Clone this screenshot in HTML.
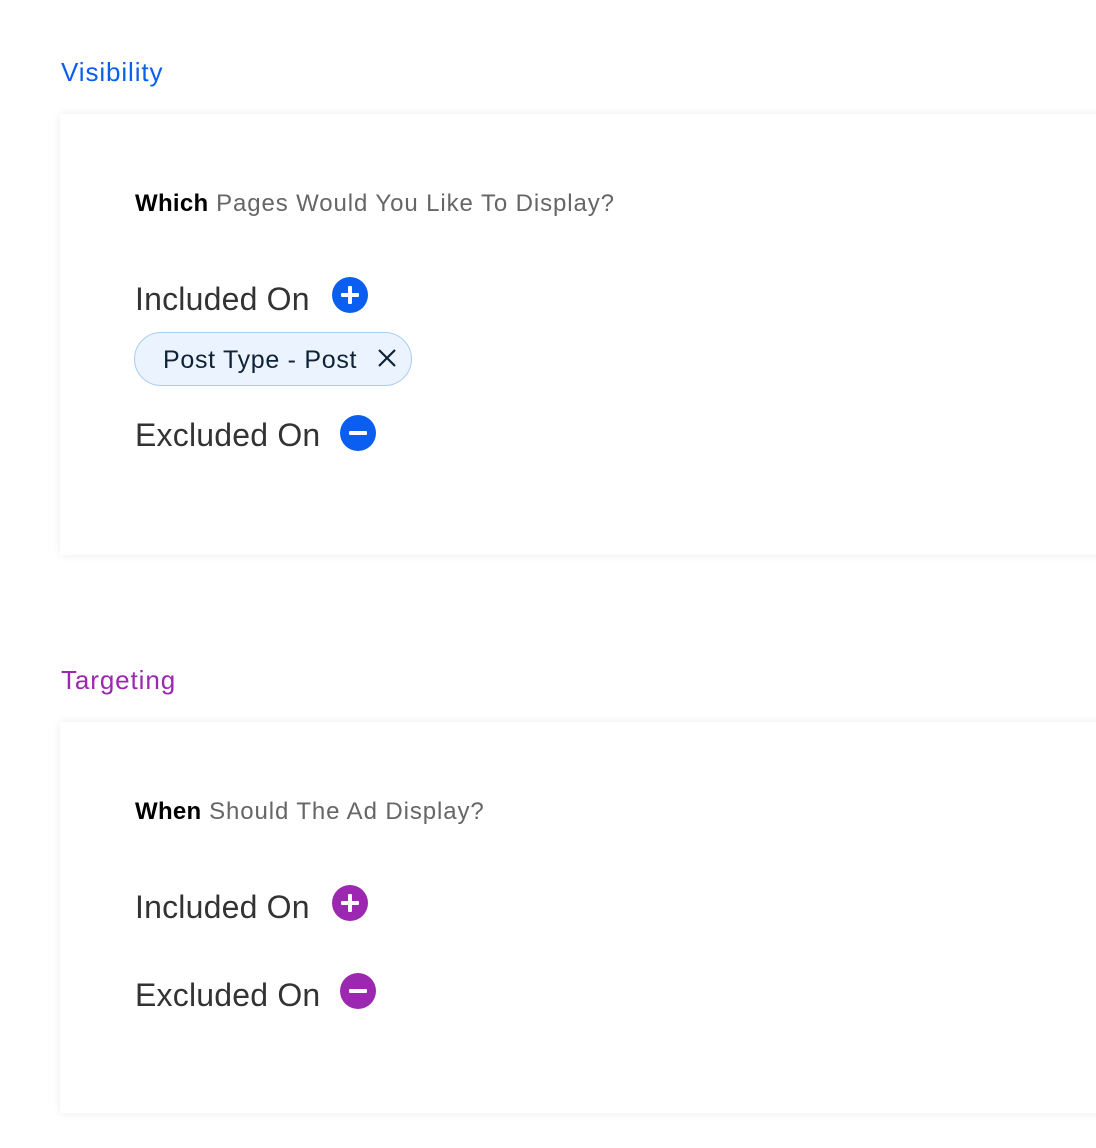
<!DOCTYPE html>
<html><head><style>
body{margin:0;background:#fff;font-family:"Liberation Sans",sans-serif;width:1096px;height:1148px;overflow:hidden;position:relative}
.h{position:absolute;left:61px;font-size:26px;letter-spacing:0.9px}
.card{position:absolute;left:60px;width:1100px;background:#fff;box-shadow:0 0 8px rgba(0,0,0,0.08)}
.q{position:absolute;left:135px;font-size:24px;color:#666;white-space:nowrap;letter-spacing:0.9px}
.q b{color:#000;letter-spacing:0.3px}
.l{position:absolute;left:135px;font-size:32px;color:#333;white-space:nowrap;letter-spacing:0.2px}
.ic{position:absolute;width:36px;height:36px;border-radius:50%}
.ic:before{content:"";position:absolute;left:9px;top:16px;width:18px;height:4px;background:#fff;border-radius:1px}
.p:after{content:"";position:absolute;left:16px;top:9px;width:4px;height:18px;background:#fff;border-radius:1px}
.chip{position:absolute;left:134px;top:332px;width:276px;height:52px;border:1.5px solid #a9cdf5;background:#eaf3fe;border-radius:28px;font-size:25px;color:#0f2236;letter-spacing:0.7px}
</style></head><body>
<div class="h" style="top:57px;color:#0a5ef0">Visibility</div>
<div class="card" style="top:114px;height:441px"></div>
<div class="q" style="top:190px"><b>Which</b> Pages Would You Like To Display?</div>
<div class="l" style="top:281px">Included On</div>
<div class="ic p" style="left:332px;top:277px;background:#0a5ef0"></div>
<div class="chip"><span style="position:absolute;left:28px;top:13px">Post Type - Post</span>
<svg style="position:absolute;left:242px;top:15px" width="20" height="20" viewBox="0 0 20 20"><path d="M2 2L18 18M18 2L2 18" stroke="#0f2236" stroke-width="2.2"/></svg></div>
<div class="l" style="top:417px">Excluded On</div>
<div class="ic" style="left:340px;top:415px;background:#0a5ef0"></div>

<div class="h" style="top:665px;color:#9c27b0">Targeting</div>
<div class="card" style="top:722px;height:391px"></div>
<div class="q" style="top:798px"><b>When</b> Should The Ad Display?</div>
<div class="l" style="top:889px">Included On</div>
<div class="ic p" style="left:332px;top:885px;background:#9c27b0"></div>
<div class="l" style="top:977px">Excluded On</div>
<div class="ic" style="left:340px;top:973px;background:#9c27b0"></div>
</body></html>
